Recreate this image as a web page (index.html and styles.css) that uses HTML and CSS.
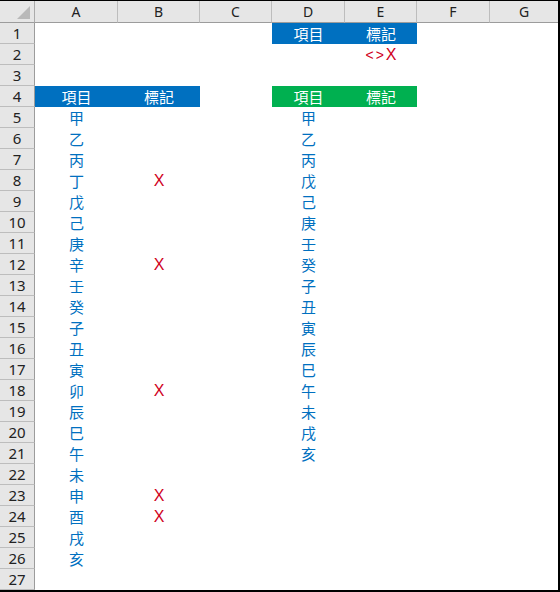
FILE: index.html
```
<!DOCTYPE html>
<html>
<head>
<meta charset="utf-8">
<link rel="stylesheet" href="styles.css">
</head>
<body>
<div class="sheet">
  <div class="row head">
    <div class="corner"><svg width="34" height="21" viewBox="0 0 34 21"><polygon points="30,5 30,18 17,18" fill="#b9b9b9"/></svg></div>
    <div class="ch">A</div><div class="ch">B</div><div class="ch">C</div><div class="ch">D</div><div class="ch">E</div><div class="ch">F</div><div class="ch">G</div>
  </div>
  <div class="row"><div class="rh">1</div><div class="cell cd fill-blue hd">項目</div><div class="cell ce fill-blue hd">標記</div></div>
  <div class="row"><div class="rh">2</div><div class="cell ce mark"><span class="ang">&lt;</span><span class="ang">&gt;</span>X</div></div>
  <div class="row"><div class="rh">3</div></div>
  <div class="row"><div class="rh">4</div><div class="cell ca fill-blue hd">項目</div><div class="cell cb fill-blue hd">標記</div><div class="cell cd fill-green hd">項目</div><div class="cell ce fill-green hd">標記</div></div>
  <div class="row"><div class="rh">5</div><div class="cell ca item">甲</div><div class="cell cd item">甲</div></div>
  <div class="row"><div class="rh">6</div><div class="cell ca item">乙</div><div class="cell cd item">乙</div></div>
  <div class="row"><div class="rh">7</div><div class="cell ca item">丙</div><div class="cell cd item">丙</div></div>
  <div class="row"><div class="rh">8</div><div class="cell ca item">丁</div><div class="cell cb mark">X</div><div class="cell cd item">戊</div></div>
  <div class="row"><div class="rh">9</div><div class="cell ca item">戊</div><div class="cell cd item">己</div></div>
  <div class="row"><div class="rh">10</div><div class="cell ca item">己</div><div class="cell cd item">庚</div></div>
  <div class="row"><div class="rh">11</div><div class="cell ca item">庚</div><div class="cell cd item">壬</div></div>
  <div class="row"><div class="rh">12</div><div class="cell ca item">辛</div><div class="cell cb mark">X</div><div class="cell cd item">癸</div></div>
  <div class="row"><div class="rh">13</div><div class="cell ca item">壬</div><div class="cell cd item">子</div></div>
  <div class="row"><div class="rh">14</div><div class="cell ca item">癸</div><div class="cell cd item">丑</div></div>
  <div class="row"><div class="rh">15</div><div class="cell ca item">子</div><div class="cell cd item">寅</div></div>
  <div class="row"><div class="rh">16</div><div class="cell ca item">丑</div><div class="cell cd item">辰</div></div>
  <div class="row"><div class="rh">17</div><div class="cell ca item">寅</div><div class="cell cd item">巳</div></div>
  <div class="row"><div class="rh">18</div><div class="cell ca item">卯</div><div class="cell cb mark">X</div><div class="cell cd item">午</div></div>
  <div class="row"><div class="rh">19</div><div class="cell ca item">辰</div><div class="cell cd item">未</div></div>
  <div class="row"><div class="rh">20</div><div class="cell ca item">巳</div><div class="cell cd item">戌</div></div>
  <div class="row"><div class="rh">21</div><div class="cell ca item">午</div><div class="cell cd item">亥</div></div>
  <div class="row"><div class="rh">22</div><div class="cell ca item">未</div></div>
  <div class="row"><div class="rh">23</div><div class="cell ca item">申</div><div class="cell cb mark">X</div></div>
  <div class="row"><div class="rh">24</div><div class="cell ca item">酉</div><div class="cell cb mark">X</div></div>
  <div class="row"><div class="rh">25</div><div class="cell ca item">戌</div></div>
  <div class="row"><div class="rh">26</div><div class="cell ca item">亥</div></div>
  <div class="row"><div class="rh">27</div></div>
</div>
</body>
</html>
```
FILE: styles.css
```
html, body {
  margin: 0;
  padding: 0;
  background: #ffffff;
}
.sheet {
  width: 558px;
  height: 589px;
  border-top: 1px solid #000000;
  border-right: 2px solid #000000;
  border-bottom: 2px solid #000000;
  background: #ffffff;
  overflow: hidden;
}
.row {
  display: grid;
  grid-template-columns: 35px 83px 82px 72px 73px 72px 73px 68px;
  grid-template-rows: 21px;
  height: 21px;
}
.row.head {
  height: 22px;
  grid-template-rows: 22px;
}
.corner {
  grid-column: 1;
  background: #e6e6e6;
  border-right: 1px solid #ababab;
  border-bottom: 1px solid #9c9c9c;
  box-sizing: border-box;
}
.corner svg {
  display: block;
}
.ch {
  background: #e6e6e6;
  border-right: 1px solid #bdbdbd;
  border-bottom: 1px solid #9c9c9c;
  box-sizing: border-box;
  font-family: "Noto Sans", "Liberation Sans", sans-serif;
  font-size: 14px;
  line-height: 21px;
  color: #222222;
  text-align: center;
}
.ch:last-child {
  border-right: none;
}
.rh {
  grid-column: 1;
  background: #e6e6e6;
  border-right: 1px solid #9c9c9c;
  border-bottom: 1px solid #bdbdbd;
  box-sizing: border-box;
  font-family: "Noto Sans", "Liberation Sans", sans-serif;
  font-size: 15px;
  line-height: 20px;
  color: #222222;
  text-align: center;
}
.cell {
  grid-row: 1;
  text-align: center;
  font-family: "Noto Sans CJK TC", "Noto Sans", sans-serif;
  font-size: 15px;
  line-height: 21px;
}
.ca { grid-column: 2; }
.cb { grid-column: 3; }
.cd { grid-column: 5; }
.ce { grid-column: 6; }
.fill-blue { background: #0070c0; }
.fill-green { background: #00b050; }
.hd { color: #ffffff; }
.item { color: #0070c0; }
.mark {
  color: #d0001c;
  font-family: "Liberation Sans", Arial, sans-serif;
  font-size: 16px;
  line-height: 21px;
}
.ang {
  font-size: 14px;
  margin-right: 2px;
}
```
